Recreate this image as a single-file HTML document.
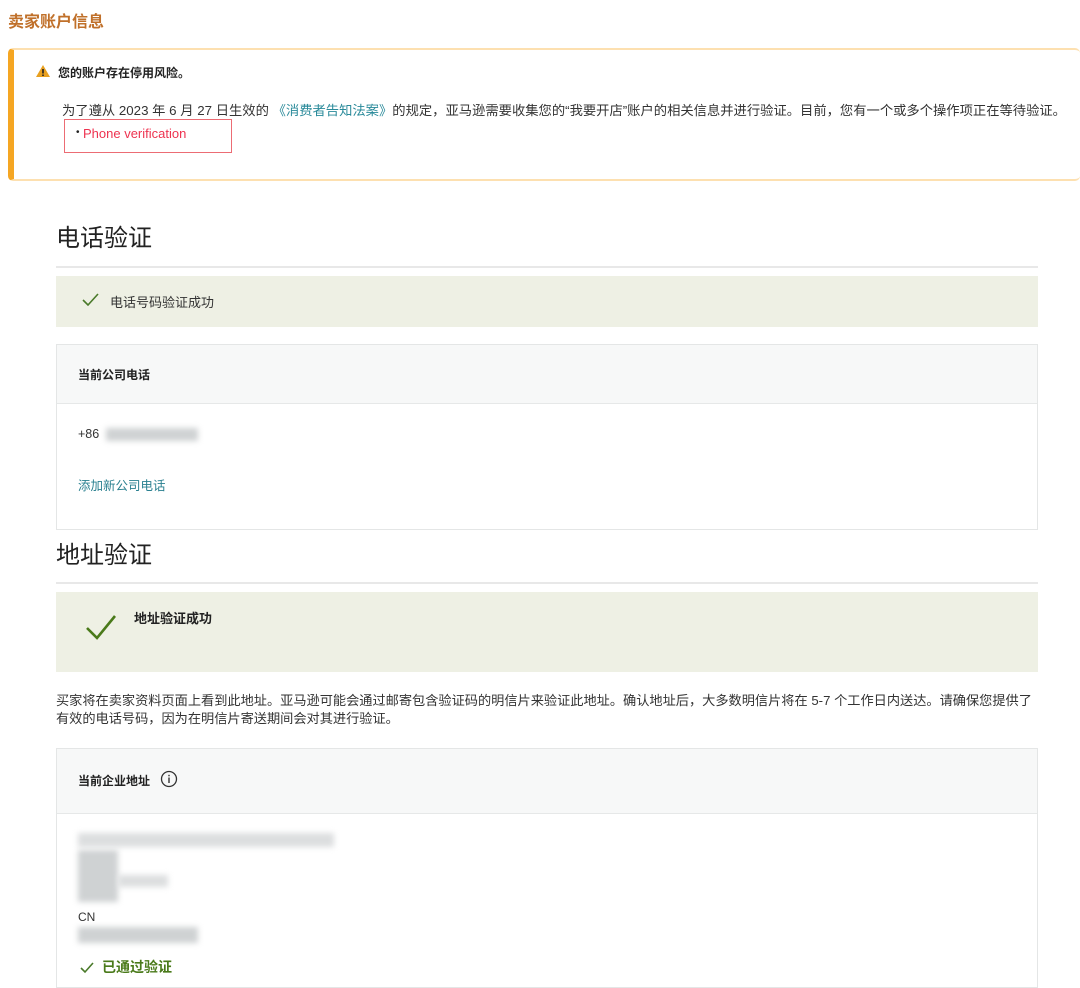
<!DOCTYPE html>
<html><head><meta charset="utf-8"><style>
*{margin:0;padding:0;box-sizing:border-box}
body{width:1080px;height:974px;overflow:hidden;background:#fff;position:relative;font-family:"Liberation Sans","Noto Sans CJK SC",sans-serif;color:#222}
.a{position:absolute;white-space:nowrap}
.blur{position:absolute;background:#cfd2d3;filter:blur(3px)}
</style></head><body>
<div class="a" style="left:8px;top:8px;font-size:16px;color:#c0702a;font-weight:bold">卖家账户信息</div>
<div class="a" style="left:8px;top:48px;width:1072px;height:133px;border:2px solid #fde0b0;border-left:6px solid #f5a623;border-radius:5px;border-right:none"></div>
<svg class="a" style="left:35px;top:64px" width="16" height="14" viewBox="0 0 16 14"><path d="M8 1L15 13H1Z" fill="#e8a020"/><rect x="7.2" y="5" width="1.6" height="4.5" fill="#222"/><rect x="7.2" y="10.5" width="1.6" height="1.5" fill="#222"/></svg>
<div class="a" style="left:58px;top:64px;font-size:12px;font-weight:bold;color:#222">您的账户存在停用风险。</div>
<div class="a" style="left:62px;top:100px;font-size:13.3px;color:#333">为了遵从 2023 年 6 月 27 日生效的 <span style="color:#2a8a9a">《消费者告知法案》</span>的规定，亚马逊需要收集您的“我要开店”账户的相关信息并进行验证。目前，您有一个或多个操作项正在等待验证。</div>
<div class="a" style="left:64px;top:119px;width:168px;height:34px;border:1.5px solid #ec6c74"></div>
<div class="a" style="left:76px;top:127px;font-size:10px">•</div>
<div class="a" style="left:83px;top:126px;font-size:13px;color:#ee3350">Phone verification</div>

<div class="a" style="left:56px;top:218px;font-size:24px;color:#222">电话验证</div>
<div class="a" style="left:56px;top:266px;width:982px;height:2px;background:#e8e8e8"></div>
<div class="a" style="left:56px;top:276px;width:982px;height:51px;background:#eef0e4"></div>
<svg class="a" style="left:82px;top:293px" width="17" height="13" viewBox="0 0 17 13"><path d="M1 7L6 12L16 1" stroke="#4a7a2a" stroke-width="1.6" fill="none"/></svg>
<div class="a" style="left:110px;top:292px;font-size:13px;color:#333">电话号码验证成功</div>
<div class="a" style="left:56px;top:344px;width:982px;height:186px;border:1.5px solid #e4e6e6"></div>
<div class="a" style="left:57px;top:345px;width:980px;height:59px;background:#f7f8f8;border-bottom:1.5px solid #e6e8e8"></div>
<div class="a" style="left:78px;top:366px;font-size:12px;font-weight:bold;color:#222">当前公司电话</div>
<div class="a" style="left:78px;top:427px;font-size:12.5px;color:#333">+86</div>
<div class="blur" style="left:106px;top:428px;width:92px;height:13px"></div>
<div class="a" style="left:78px;top:475px;font-size:12.5px;color:#2a8090">添加新公司电话</div>

<div class="a" style="left:56px;top:535px;font-size:24px;color:#222">地址验证</div>
<div class="a" style="left:56px;top:582px;width:982px;height:2px;background:#e8e8e8"></div>
<div class="a" style="left:56px;top:592px;width:982px;height:80px;background:#eef0e4"></div>
<svg class="a" style="left:85px;top:613px" width="32" height="28" viewBox="0 0 32 28"><path d="M2 15L12 25L30 3" stroke="#4a7a1a" stroke-width="2.6" fill="none"/></svg>
<div class="a" style="left:134px;top:608px;font-size:13px;font-weight:bold;color:#222">地址验证成功</div>
<div class="a" style="left:56px;top:692px;font-size:13.2px;color:#333;line-height:18px">买家将在卖家资料页面上看到此地址。亚马逊可能会通过邮寄包含验证码的明信片来验证此地址。确认地址后，大多数明信片将在 5-7 个工作日内送达。请确保您提供了<br>有效的电话号码，因为在明信片寄送期间会对其进行验证。</div>
<div class="a" style="left:56px;top:748px;width:982px;height:240px;border:1.5px solid #e4e6e6"></div>
<div class="a" style="left:57px;top:749px;width:980px;height:65px;background:#f7f8f8;border-bottom:1.5px solid #e6e8e8"></div>
<div class="a" style="left:78px;top:772px;font-size:12px;font-weight:bold;color:#222">当前企业地址</div>
<svg class="a" style="left:160px;top:770px" width="18" height="18" viewBox="0 0 18 18"><circle cx="9" cy="9" r="7.5" stroke="#333" stroke-width="1.3" fill="none"/><rect x="8.3" y="7.5" width="1.4" height="5.5" fill="#333"/><rect x="8.3" y="4.8" width="1.4" height="1.5" fill="#333"/></svg>
<div class="blur" style="left:78px;top:833px;width:256px;height:14px;background:#dcdedf"></div>
<div class="blur" style="left:78px;top:850px;width:40px;height:52px"></div>
<div class="blur" style="left:118px;top:875px;width:50px;height:12px;background:#dcdedf"></div>
<div class="a" style="left:78px;top:910px;font-size:12px;color:#333">CN</div>
<div class="blur" style="left:78px;top:927px;width:120px;height:16px"></div>
<svg class="a" style="left:80px;top:962px" width="14" height="12" viewBox="0 0 14 12"><path d="M1 6L5 10L13 1" stroke="#4a7a2a" stroke-width="1.6" fill="none"/></svg>
<div class="a" style="left:102px;top:957px;font-size:14px;color:#4a7a1a;font-weight:bold">已通过验证</div>
</body></html>
